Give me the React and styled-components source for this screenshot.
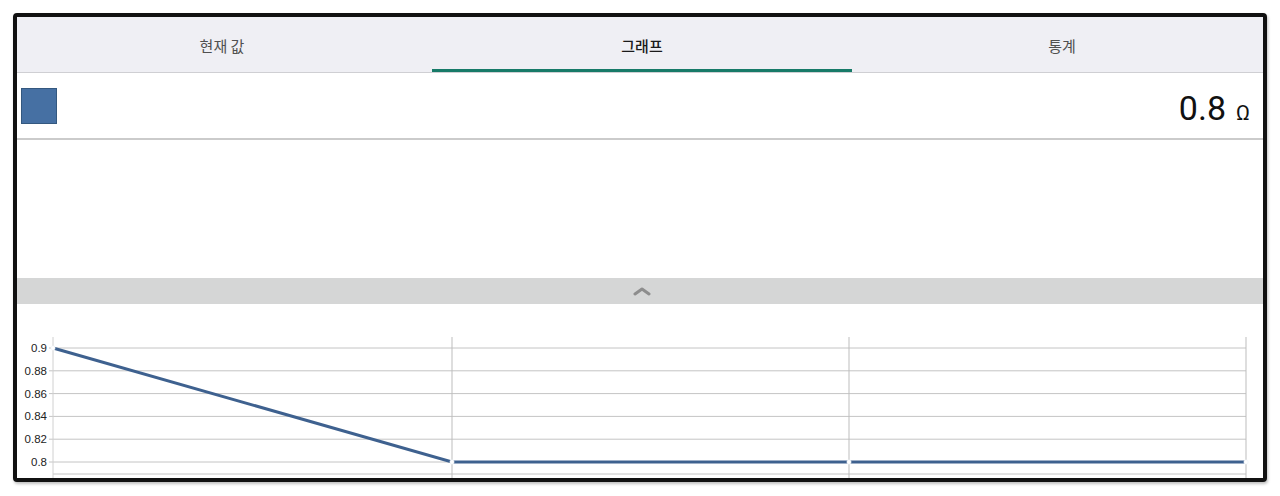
import React from "react";
import styled, { createGlobalStyle } from "styled-components";

const Global = createGlobalStyle`
  html, body { margin: 0; padding: 0; background: #fff; }
  body { font-family: "Noto Sans CJK KR", "Noto Sans", Roboto, sans-serif; }
`;

const Page = styled.div`
  width: 1280px;
  height: 496px;
  padding: 13px 0 0 13px;
  box-sizing: border-box;
`;

const Frame = styled.div`
  width: 1254px;
  height: 469px;
  box-sizing: border-box;
  border: 4px solid #111;
  border-radius: 4px;
  overflow: hidden;
  box-shadow: 1px 2px 3px rgba(0, 0, 0, 0.25);
  background: #fff;
`;

const Content = styled.div`
  width: 1260px;
  margin-left: -5px;
  display: flex;
  flex-direction: column;
`;

const TabBar = styled.div`
  display: grid;
  grid-template-columns: repeat(3, 420px);
  height: 55px;
  background: #efeff4;
  border-bottom: 1px solid #cfcfd3;
`;

const Tab = styled.div`
  display: flex;
  align-items: center;
  justify-content: center;
  font-size: 15px;
  color: ${(p) => (p.$active ? "#1a1a1a" : "#505050")};
  font-weight: ${(p) => (p.$active ? 500 : 400)};
  box-shadow: ${(p) => (p.$active ? "inset 0 -3px 0 #177a68" : "none")};
  padding-top: 2px;
  box-sizing: border-box;
`;

const ValueRow = styled.div`
  height: 65px;
  display: flex;
  align-items: center;
  justify-content: space-between;
  padding: 0 22px 0 9px;
  border-bottom: 2px solid #cbcbcb;
`;

const Swatch = styled.div`
  width: 34px;
  height: 34px;
  background: #4670a3;
  border: 1px solid #34587f;
  margin-top: 1px;
`;

const Value = styled.div`
  font-family: Roboto, "Noto Sans", sans-serif;
  font-size: 34px;
  color: #111;
  display: flex;
  align-items: baseline;
  gap: 10px;
  margin-top: 4px;
`;

const Unit = styled.span`
  font-size: 21px;
`;

const Blank = styled.div`
  height: 138px;
`;

const Handle = styled.div`
  height: 26px;
  background: #d5d6d6;
  display: flex;
  align-items: center;
  justify-content: center;
`;

const ChartBox = styled.div`
  height: 174px;
`;

const labels = ["0.9", "0.88", "0.86", "0.84", "0.82", "0.8"];
const top = 44;
const step = 22.8;
const left = 41;
const right = 1234;
const xs = [41, 440, 837, 1234];
const vals = [0.9, 0.8, 0.8, 0.8];
const yOf = (v) => top + ((0.9 - v) / 0.02) * step;

function Chart() {
  return (
    <svg width="1260" height="174" viewBox="0 0 1260 174">
      {labels.map((l, i) => {
        const y = top + i * step;
        return (
          <g key={l}>
            <line x1={left - 4} x2={right} y1={y} y2={y} stroke="#c4c4c4" strokeWidth="1" />
            <text
              x="35"
              y={y + 4}
              textAnchor="end"
              fontSize="11.5"
              fontFamily="'Liberation Sans', Arial, sans-serif"
              fill="#222"
            >
              {l}
            </text>
          </g>
        );
      })}
      <line x1={left} x2={right} y1="170" y2="170" stroke="#c4c4c4" strokeWidth="1" />
      {xs.map((x, i) => (
        <line key={i} x1={x} x2={x} y1="33" y2="174" stroke={i === 0 ? "#d0d0d0" : "#bdbdbd"} strokeWidth="1" />
      ))}
      <polyline
        points={xs.map((x, i) => `${x},${yOf(vals[i])}`).join(" ")}
        fill="none"
        stroke="#3e618f"
        strokeWidth="3"
      />
      {xs.map((x, i) => (
        <circle key={i} cx={x} cy={yOf(vals[i])} r="2.2" fill="#fff" stroke="#e8eef5" strokeWidth="0.5" />
      ))}
    </svg>
  );
}

export default function App() {
  return (
    <Page>
      <Global />
      <Frame>
        <Content>
          <TabBar>
            <Tab>현재 값</Tab>
            <Tab $active>그래프</Tab>
            <Tab>통계</Tab>
          </TabBar>
          <ValueRow>
            <Swatch />
            <Value>
              0.8<Unit>Ω</Unit>
            </Value>
          </ValueRow>
          <Blank />
          <Handle>
            <svg width="18" height="10" viewBox="0 0 18 10">
              <path d="M2 8 L9 3 L16 8" fill="none" stroke="#8d8d8d" strokeWidth="3" strokeLinecap="round" strokeLinejoin="round" />
            </svg>
          </Handle>
          <ChartBox>
            <Chart />
          </ChartBox>
        </Content>
      </Frame>
    </Page>
  );
}
